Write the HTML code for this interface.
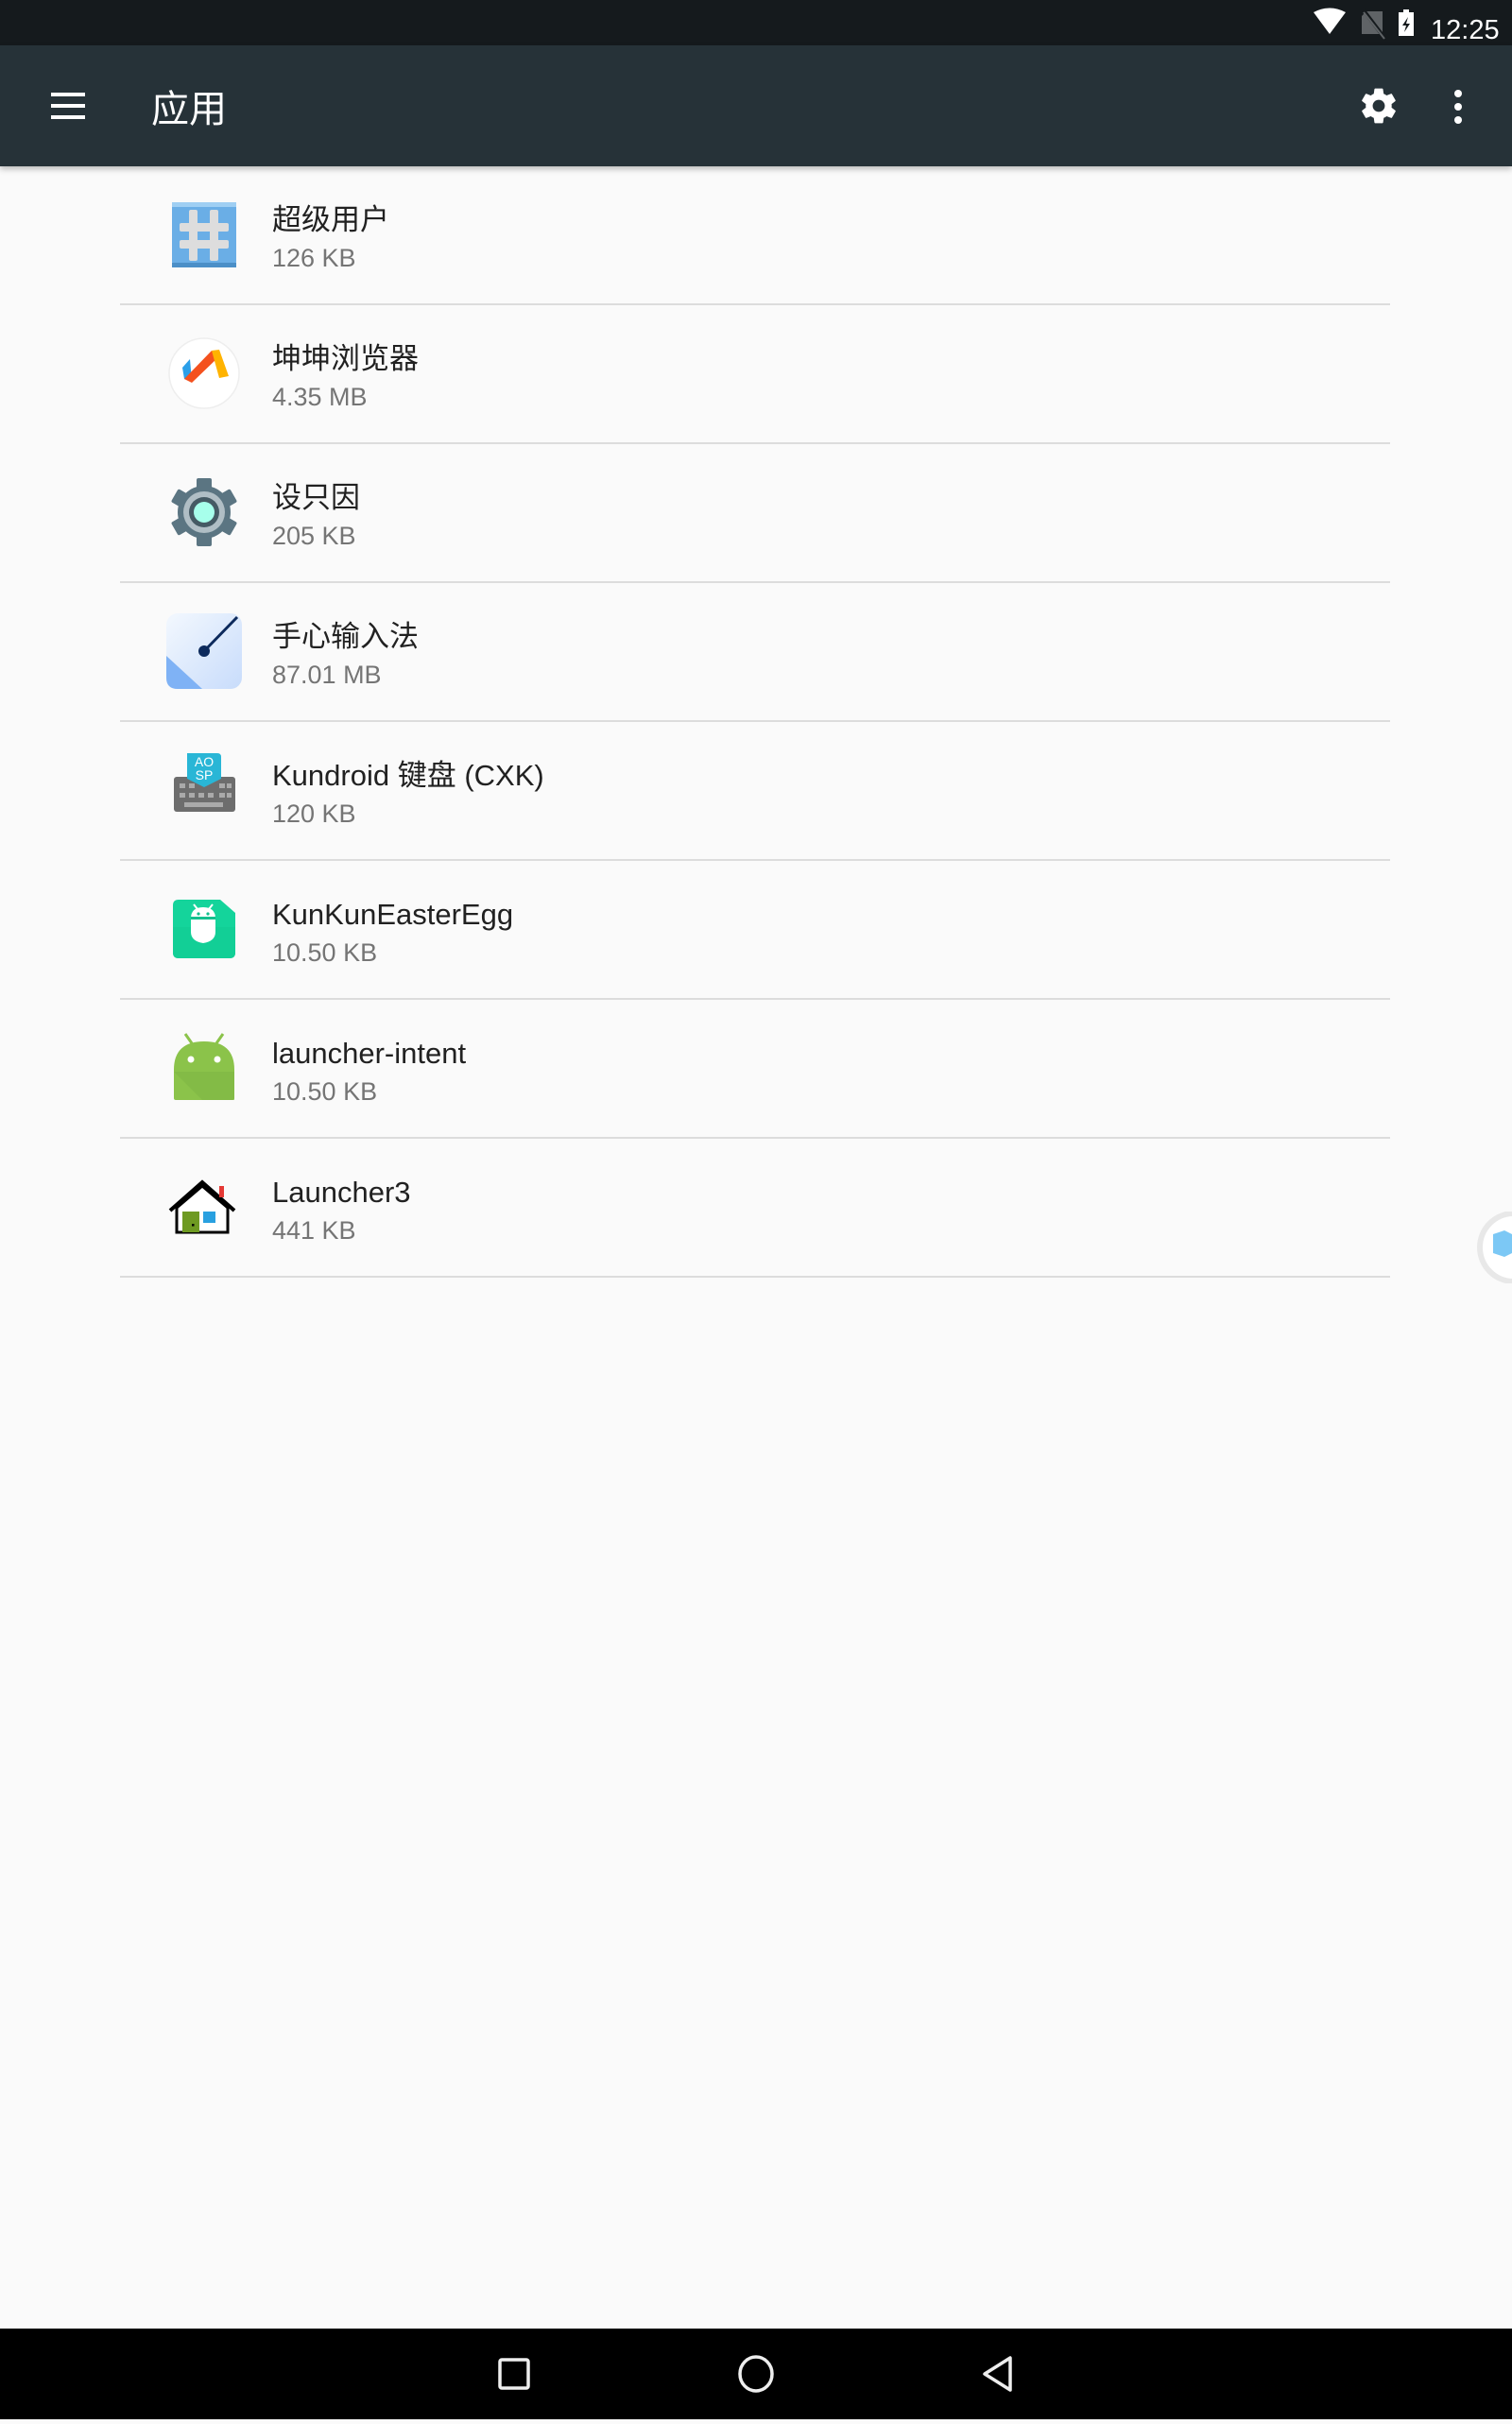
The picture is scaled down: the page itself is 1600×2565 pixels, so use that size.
<!DOCTYPE html>
<html><head><meta charset="utf-8"><style>
*{margin:0;padding:0;box-sizing:border-box}
body{width:1600px;height:2560px;background:#fafafa;position:relative;overflow:hidden;font-family:"Liberation Sans","Noto Sans CJK SC",sans-serif}
.sb{position:absolute;left:0;top:0;width:1600px;height:48px;background:#151a1d}
.tb{position:absolute;left:0;top:48px;width:1600px;height:128px;background:#263238;box-shadow:0 3px 6px rgba(0,0,0,.25)}
.title{position:absolute;left:160px;top:38px;font-size:40px;color:#fff;font-family:"Noto Sans CJK SC",sans-serif;line-height:52px}
.row{position:absolute;left:0;width:1600px;height:147px}
.div{position:absolute;left:127px;width:1344px;height:2px;background:#dcdcdc;bottom:0}
.ic{position:absolute;left:176px;top:32px;width:80px;height:80px}
.t1{position:absolute;left:288px;top:37px;font-size:31px;color:#212121;line-height:40px;font-family:"Liberation Sans","Noto Sans CJK SC",sans-serif}
.t2{position:absolute;left:288px;top:79px;font-size:27px;color:#757575;line-height:36px}
.nav{position:absolute;left:0;top:2464px;width:1600px;height:96px;background:#000}
</style></head><body>
<div class="sb">
<svg style="position:absolute;left:1380px;top:8px" width="220" height="34">
<path d="M10 5 Q27 -4 44 5 L27 28 Z" fill="#fff"/>
<path d="M66 4 h17 v24 h-22 v-19 z" fill="#5f6366"/>
<path d="M63 3 L85 32" stroke="#151a1d" stroke-width="4"/><path d="M63 5 L85 33" stroke="#5f6366" stroke-width="2"/>
<rect x="100" y="5" width="16" height="25" fill="#fff"/><rect x="105" y="2" width="6" height="4" fill="#fff"/>
<path d="M110 10 l-6 9 h4 l-2 7 l6 -9 h-4 z" fill="#151a1d"/>
<text x="134" y="33" font-size="29" fill="#fff" font-family="Liberation Sans">12:25</text>
</svg>
</div>
<div class="tb">
<svg style="position:absolute;left:54px;top:50px" width="36" height="28"><rect y="0" width="36" height="4" fill="#fff"/><rect y="12" width="36" height="4" fill="#fff"/><rect y="24" width="36" height="4" fill="#fff"/></svg>
<div class="title">应用</div>
<svg style="position:absolute;left:1437px;top:42px" width="44" height="44" viewBox="0 0 24 24"><path fill="#fff" d="M19.4 13c.04-.3.06-.65.06-1s-.02-.7-.06-1l2.1-1.65c.2-.15.25-.42.13-.64l-2-3.460c-.12-.22-.4-.3-.6-.22l-2.5 1c-.52-.4-1.080-.73-1.7-.98l-.38-2.65A.49.49 0 0 0 14 2h-4c-.25 0-.46.18-.5.42l-.37 2.65c-.6.25-1.17.59-1.69.98l-2.49-1c-.23-.09-.5 0-.61.22l-2 3.46c-.13.22-.07.49.12.64L4.57 11c-.04.32-.07.66-.07 1s.02.68.07 1l-2.11 1.65c-.19.15-.24.42-.12.64l2 3.46c.12.22.39.3.61.22l2.49-1c.52.4 1.08.73 1.69.98l.37 2.65c.04.24.25.42.5.42h4c.25 0 .46-.18.49-.42l.38-2.65c.61-.25 1.17-.59 1.69-.98l2.49 1c.23.09.49 0 .61-.22l2-3.46c.12-.22.07-.49-.12-.64L19.4 13zM12 15.5A3.5 3.5 0 1 1 12 8.5a3.5 3.5 0 0 1 0 7z"/></svg>
<svg style="position:absolute;left:1535px;top:46px" width="16" height="40"><circle cx="8" cy="5" r="4" fill="#fff"/><circle cx="8" cy="19" r="4" fill="#fff"/><circle cx="8" cy="33" r="4" fill="#fff"/></svg>
</div>

<div class="row" style="top:176px">
<svg class="ic" viewBox="0 0 80 80"><rect x="6" y="6" width="68" height="68" rx="5" fill="#6aaee6"/><rect x="6" y="6" width="68" height="5" fill="#9fcff3"/><rect x="6" y="70" width="68" height="5" fill="#4b8fc7"/><g fill="#ddd"><rect x="24" y="14" width="9" height="54" rx="2"/><rect x="46" y="14" width="9" height="54" rx="2"/><rect x="14" y="28" width="52" height="9" rx="2"/><rect x="14" y="46" width="52" height="9" rx="2"/></g></svg>
<div class="t1">超级用户</div><div class="t2">126 KB</div><div class="div"></div></div>

<div class="row" style="top:323px">
<svg class="ic" viewBox="0 0 80 80"><circle cx="40" cy="40" r="37" fill="#fff" stroke="#eee" stroke-width="1.5"/><path d="M17 34 L25 25 L27 48 L19 46Z" fill="#2b9fe8"/><path d="M19 46 L48 16 L54 24 L27 50Z" fill="#f4511e"/><path d="M48 16 L56 15 L66 43 L56 45Z" fill="#ffb300"/></svg>
<div class="t1">坤坤浏览器</div><div class="t2">4.35 MB</div><div class="div"></div></div>

<div class="row" style="top:470px">
<svg class="ic" viewBox="0 0 80 80"><g transform="translate(40,40)"><g fill="#5b7582"><circle r="28"/><rect x="-8" y="-36" width="16" height="14" rx="2"/><rect x="-8" y="-36" width="16" height="14" rx="2" transform="rotate(60)"/><rect x="-8" y="-36" width="16" height="14" rx="2" transform="rotate(120)"/><rect x="-8" y="-36" width="16" height="14" rx="2" transform="rotate(180)"/><rect x="-8" y="-36" width="16" height="14" rx="2" transform="rotate(240)"/><rect x="-8" y="-36" width="16" height="14" rx="2" transform="rotate(300)"/></g><circle r="22" fill="#b0bec5"/><circle r="16" fill="#455a64"/><circle r="11" fill="#a7ffeb"/></g></svg>
<div class="t1">设只因</div><div class="t2">205 KB</div><div class="div"></div></div>

<div class="row" style="top:617px">
<svg class="ic" viewBox="0 0 80 80"><defs><linearGradient id="g1" x1="0" y1="0" x2="1" y2="1"><stop offset="0" stop-color="#f3f8fe"/><stop offset="1" stop-color="#c8dcfb"/></linearGradient></defs><rect x="0" y="0" width="80" height="80" rx="12" fill="url(#g1)"/><path d="M0 45 L38 80 H12 Q0 80 0 68Z" fill="#7fb2f5"/><path d="M40 40 L75 4" stroke="#0d2a5c" stroke-width="3"/><circle cx="40" cy="40" r="6" fill="#0d2a5c"/></svg>
<div class="t1">手心输入法</div><div class="t2">87.01 MB</div><div class="div"></div></div>

<div class="row" style="top:764px">
<svg class="ic" viewBox="0 0 80 80"><rect x="8" y="26" width="65" height="37" rx="3" fill="#6d6d6d"/><g fill="#aaa"><rect x="14" y="33" width="6" height="5"/><rect x="24" y="33" width="6" height="5"/><rect x="56" y="33" width="6" height="5"/><rect x="64" y="33" width="5" height="5"/><rect x="14" y="43" width="6" height="5"/><rect x="24" y="43" width="6" height="5"/><rect x="34" y="43" width="6" height="5"/><rect x="44" y="43" width="6" height="5"/><rect x="56" y="43" width="6" height="5"/><rect x="64" y="43" width="5" height="5"/><rect x="19" y="53" width="41" height="5"/></g><path d="M22 1 H54 Q58 1 58 5 V28 L40 37 L22 28 Z" fill="#29b6d6"/><text x="40" y="15" font-size="14" fill="#fff" text-anchor="middle" font-family="Liberation Sans">AO</text><text x="40" y="29" font-size="14" fill="#fff" text-anchor="middle" font-family="Liberation Sans">SP</text></svg>
<div class="t1">Kundroid 键盘 (CXK)</div><div class="t2">120 KB</div><div class="div"></div></div>

<div class="row" style="top:911px">
<svg class="ic" viewBox="0 0 80 80"><path d="M13 9 H57 L73 23 V65 Q73 71 67 71 H13 Q7 71 7 65 V15 Q7 9 13 9Z" fill="#14d49b"/><path d="M7 38 H73 V65 Q73 71 67 71 H13 Q7 71 7 65Z" fill="#12cf96"/><path d="M26 29 Q26 17 39 17 Q52 17 52 29 V43 Q52 53 39 55 Q26 53 26 43Z" fill="#fff"/><rect x="26" y="27" width="26" height="3" fill="#14c08e"/><circle cx="34" cy="24" r="1.6" fill="#14c08e"/><circle cx="44" cy="24" r="1.6" fill="#14c08e"/><path d="M29 14 l4 5 M49 14 l-4 5" stroke="#fff" stroke-width="2"/></svg>
<div class="t1">KunKunEasterEgg</div><div class="t2">10.50 KB</div><div class="div"></div></div>

<div class="row" style="top:1058px">
<svg class="ic" viewBox="0 0 80 80"><path d="M8 42 Q8 12 40 12 Q72 12 72 42 V72 Q72 74 70 74 H10 Q8 74 8 72Z" fill="#8bc34a"/><path d="M8 44 H72 V74 H38Z" fill="#7cb342" opacity=".5"/><circle cx="26" cy="31" r="3.5" fill="#fff"/><circle cx="54" cy="31" r="3.5" fill="#fff"/><path d="M20 4 l7 10 M60 4 l-7 10" stroke="#8bc34a" stroke-width="3"/></svg>
<div class="t1">launcher-intent</div><div class="t2">10.50 KB</div><div class="div"></div></div>

<div class="row" style="top:1205px">
<svg class="ic" viewBox="0 0 80 80"><path d="M4 44 L38 14 L72 44" fill="none" stroke="#000" stroke-width="4"/><rect x="56" y="18" width="5" height="12" fill="#e53935"/><path d="M11 41 L38 18 L65 41 V67 H11Z" fill="#fff" stroke="#000" stroke-width="3"/><rect x="17" y="45" width="18" height="22" fill="#6e9a22"/><rect x="39" y="45" width="13" height="12" fill="#29a0e0"/><rect x="27" y="58" width="2.5" height="2.5" fill="#000"/></svg>
<div class="t1">Launcher3</div><div class="t2">441 KB</div><div class="div"></div></div>

<svg style="position:absolute;left:1560px;top:1282px" width="40" height="76"><circle cx="42" cy="38" r="36" fill="#fff" stroke="#e8e8e8" stroke-width="6"/><path d="M20 24 L32 20 L40 24 V44 L32 48 L20 44Z" fill="#7cc8f5"/></svg>

<div class="nav"><svg width="1600" height="96"><rect x="529" y="33" width="30" height="30" rx="2" fill="none" stroke="#eee" stroke-width="3.5"/><ellipse cx="800" cy="48" rx="17" ry="18" fill="none" stroke="#eee" stroke-width="3.5"/><path d="M1069 31 V65 L1042 48Z" fill="none" stroke="#eee" stroke-width="3.5" stroke-linejoin="round"/></svg></div>
</body></html>
